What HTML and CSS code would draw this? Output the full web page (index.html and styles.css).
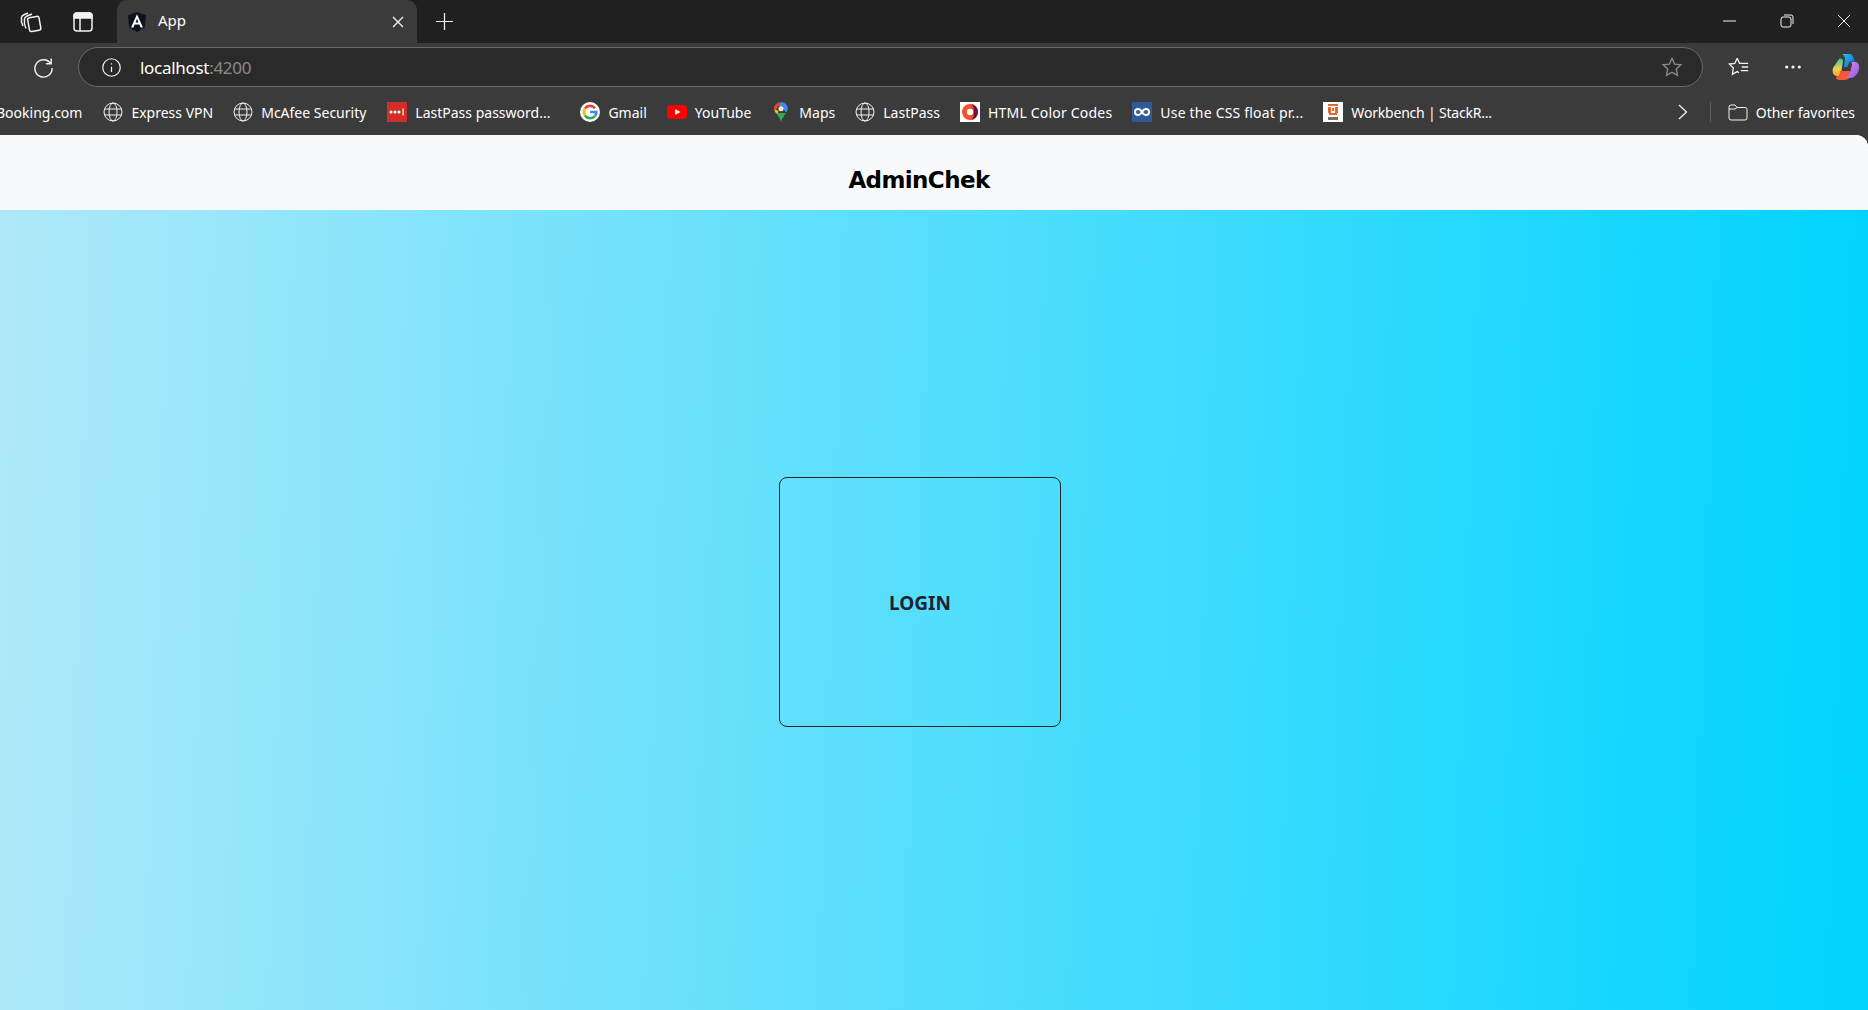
FILE: index.html
```html
<!DOCTYPE html>
<html>
<head>
    <meta charset="utf-8" />
    <title>App</title>
    <link rel="stylesheet" href="styles.css">
</head>
<body>
    <section class="tabstrip">
        <div class="stripicons">
            <svg class="ico" viewBox="0 0 24 24"><rect x="9.500" y="7" width="11.500" height="14" rx="2" transform="rotate(-10 15 14)"/><path d="M7 18.500C5.500 15.500 5 12 5.500 8.800c.2-1.300 1-2 2-2.500l5.500-2.300M4 16C2.500 13 2 10 2.500 7.500c.2-1.300 1-2 2-2.500l4.500-2"/></svg>
            <svg class="ico" viewBox="0 0 24 24"><rect x="3" y="3" width="18" height="18" rx="3"/><path class="fill" d="M3 6a3 3 0 0 1 3-3h12a3 3 0 0 1 3 3v2H3z"/><path d="M9 8v13"/></svg>
        </div>
        <div class="tab">
            <svg class="tabicon" viewBox="0 0 24 24"><path fill="#10131c" d="M12 1l10 3.500-1.500 13.500L12 23l-8.500-5L2 4.500z"/><path fill="#fff" d="M12 3.500L5.500 18h2.600l1.300-3.300h5.200l1.300 3.300h2.600zM10.400 12.500L12 8.500l1.600 4z"/></svg>
            <span class="tabtitle">App</span>
            <svg class="tabclose" viewBox="0 0 12 12"><path d="M1 1l10 10M11 1L1 11"/></svg>
        </div>
        <svg class="newtab" viewBox="0 0 20 20"><path d="M10 1v18M1 10h18"/></svg>
        <div class="winctrls">
            <svg class="winbtn" viewBox="0 0 14 14"><path d="M0 7h13"/></svg>
            <svg class="winbtn" viewBox="0 0 14 14"><rect x="1" y="3" width="10" height="10" rx="2"/><path d="M4 1h7a2 2 0 0 1 2 2v7"/></svg>
            <svg class="winbtn" viewBox="0 0 14 14"><path d="M1 1l12 12M13 1L1 13"/></svg>
        </div>
    </section>

    <section class="addressrow">
        <svg class="reload" viewBox="0 0 24 24"><path d="M19.500 8A9 9 0 1 0 21 12.500M20 2.500V8h-5.500"/></svg>
        <div class="addressbar">
            <svg class="info" viewBox="0 0 24 24"><circle cx="12" cy="12" r="10"/><path d="M12 11v6M12 7v1.500"/></svg>
            <span class="url">localhost<span class="port">:4200</span></span>
            <svg class="star" viewBox="0 0 24 24"><path d="M12 2.500l2.900 6.300 6.800.8-5 4.700 1.300 6.800-6-3.400-6 3.400 1.300-6.800-5-4.700 6.800-.8z"/></svg>
        </div>
        <svg class="favs" viewBox="0 0 24 24"><path d="M10 2.500L7.400 8l-5.900.8L5.800 13l-1 7 5.200-3 2 1.300M10 2.500L12.600 8H22M15 12h7M14 16h8"/></svg>
        <svg class="more" viewBox="0 0 20 4"><circle cx="3" cy="2" r="1.800"/><circle cx="10" cy="2" r="1.800"/><circle cx="17" cy="2" r="1.800"/></svg>
        <svg class="copilot" viewBox="0 0 28 28">
            <defs>
                <linearGradient id="cpa" x1="0" y1="0" x2="1" y2="1"><stop offset="0" stop-color="#1ec8e8"/><stop offset="1" stop-color="#1a5fe0"/></linearGradient>
                <linearGradient id="cpb" x1="0" y1="0" x2="0" y2="1"><stop offset="0" stop-color="#3fc0a0"/><stop offset=".6" stop-color="#f2d34a"/><stop offset="1" stop-color="#f59a3a"/></linearGradient>
                <linearGradient id="cpc" x1="0" y1="0" x2="1" y2="1"><stop offset="0" stop-color="#e58be0"/><stop offset="1" stop-color="#8a58e8"/></linearGradient>
            </defs>
            <path fill="url(#cpb)" d="M7 6c2-1 4 0 4 2l-2 12c-1 3-3 4-5 3C1 22 0 19 1 15z"/>
            <path fill="#f2573c" d="M8 18h9c2 0 2 3 1 5-1 3-3 4-5 4H7c-2 0-3-1-3-3 2 0 4-2 4-6z"/>
            <path fill="url(#cpa)" d="M10 1h7c3 0 4 2 5 5l1 3c-2-1-5-1-6 1l-1 3-1 1h-3l1-8c0-2-1-4-3-5z"/>
            <path fill="url(#cpc)" d="M19 9h4c3 0 5 3 4 7-1 5-4 8-8 9-2 0-4 0-5-1 2 0 3-2 4-4l2-8c0-1 0-2-1-3z"/>
        </svg>
    </section>

    <section class="bookmarks">
        <div class="bmlist">
            <span class="bm bmfirst"><span class="bmtext">Booking.com</span></span>
            <span class="bm">
                <svg class="bmicon globe" viewBox="0 0 20 20"><circle cx="10" cy="10" r="9"/><ellipse cx="10" cy="10" rx="4" ry="9"/><path d="M1.500 7h17M1.500 13h17"/></svg>
                <span class="bmtext">Express VPN</span>
            </span>
            <span class="bm">
                <svg class="bmicon globe" viewBox="0 0 20 20"><circle cx="10" cy="10" r="9"/><ellipse cx="10" cy="10" rx="4" ry="9"/><path d="M1.500 7h17M1.500 13h17"/></svg>
                <span class="bmtext">McAfee Security</span>
            </span>
            <span class="bm bmclipped">
                <svg class="bmicon" viewBox="0 0 20 20"><rect width="20" height="20" fill="#d32d27"/><circle cx="4" cy="10" r="1.500" fill="#fff"/><circle cx="8" cy="10" r="1.500" fill="#fff"/><circle cx="12" cy="10" r="1.500" fill="#fff"/><rect x="15.500" y="6.500" width="1.200" height="7" fill="#fff"/></svg>
                <span class="bmtext">LastPass password...</span>
            </span>
            <span class="bm">
                <svg class="bmicon" viewBox="0 0 20 20"><circle cx="10" cy="10" r="10" fill="#fff"/><path fill="none" stroke="#ea4335" stroke-width="2.600" d="M15 6.200A6.300 6.300 0 0 0 5 6.500"/><path fill="none" stroke="#fbbc05" stroke-width="2.600" d="M5 6.500a6.300 6.300 0 0 0 0 7"/><path fill="none" stroke="#34a853" stroke-width="2.600" d="M5 13.500a6.300 6.300 0 0 0 10 .5"/><path fill="none" stroke="#4285f4" stroke-width="2.600" d="M15 14c1-1 1.300-2.300 1.300-4H10"/></svg>
                <span class="bmtext">Gmail</span>
            </span>
            <span class="bm">
                <svg class="bmicon" viewBox="0 0 20 20"><rect y="3" width="20" height="14" rx="4" fill="#f00"/><path fill="#fff" d="M8 7l5.500 3L8 13z"/></svg>
                <span class="bmtext">YouTube</span>
            </span>
            <span class="bm">
                <svg class="bmicon" viewBox="0 0 20 20"><path fill="#34a853" d="M10 20c-1-4-3-6-5-9h10c-2 3-4 5-5 9z"/><path fill="#fbbc05" d="M4.500 10.500C3.500 9 3.200 8 3.200 6.800L7.500 9l-1 3z"/><path fill="#4285f4" d="M10 0c3.800 0 6.800 3 6.800 6.800 0 1.200-.5 2.500-1.500 3.700L12 7 7 3z"/><path fill="#ea4335" d="M4.500 2.500L7.500 5 3.200 8.500C3 5.500 3 4 4.500 2.500z"/><path fill="#db4437" d="M4.500 2.500C6 .8 8 0 10 0L7 5z"/><circle cx="10" cy="6.800" r="2.500" fill="#f3e9c0"/></svg>
                <span class="bmtext">Maps</span>
            </span>
            <span class="bm">
                <svg class="bmicon globe" viewBox="0 0 20 20"><circle cx="10" cy="10" r="9"/><ellipse cx="10" cy="10" rx="4" ry="9"/><path d="M1.500 7h17M1.500 13h17"/></svg>
                <span class="bmtext">LastPass</span>
            </span>
            <span class="bm">
                <svg class="bmicon" viewBox="0 0 20 20"><rect width="20" height="20" fill="#fff"/><circle cx="10" cy="10" r="8" fill="#f4512c"/><path fill="#6d1237" d="M10 2a8 8 0 0 1 0 16c3 0 4-4 4-8s-1-8-4-8z"/><circle cx="10" cy="10" r="3.200" fill="#fff"/></svg>
                <span class="bmtext bmloose">HTML Color Codes</span>
            </span>
            <span class="bm">
                <svg class="bmicon" viewBox="0 0 20 20"><rect width="20" height="20" fill="#2f5b96"/><path fill="none" stroke="#fff" stroke-width="2" d="M10 10C8.500 7.500 7.300 7 6 7a3 3 0 0 0 0 6c1.300 0 2.500-.5 4-3s2.700-3 4-3a3 3 0 0 1 0 6c-1.300 0-2.500-.5-4-3z"/></svg>
                <span class="bmtext bmloose">Use the CSS float pr...</span>
            </span>
            <span class="bm">
                <svg class="bmicon" viewBox="0 0 20 20"><rect width="20" height="20" fill="#fff"/><path fill="#e8662e" d="M5 2h10v2H5zM5 5h3v6H5zM12 5h3v6h-3zM9 6h2v3H9zM6 11h8v2H6z"/><rect x="5" y="15" width="10" height="3" fill="#7a6a60"/></svg>
                <span class="bmtext bmtight">Workbench | StackR...</span>
            </span>
        </div>
        <svg class="bmmore" viewBox="0 0 10 16"><path d="M1 1l7.500 7L1 15"/></svg>
        <span class="bmsep"></span>
        <span class="bm bmother">
            <svg class="bmicon globe" viewBox="0 0 20 20"><path d="M1 5a2 2 0 0 1 2-2h4l2 2.500h8a2 2 0 0 1 2 2V16a2 2 0 0 1-2 2H3a2 2 0 0 1-2-2zM1 7h6l2-1.500"/></svg>
            <span class="bmtext">Other favorites</span>
        </span>
    </section>

    <section class="page">
        <header class="apptitle">AdminChek</header>
        <main class="appmain">
            <div class="logincard">LOGIN</div>
        </main>
    </section>
</body>
</html>
```

FILE: styles.css
```css
* {
    padding: 0;
    margin: 0;
    box-sizing: border-box;
}
html, body {
    height: 100%;
    overflow: hidden;
}
body {
    display: flex;
    flex-direction: column;
    background-color: #3b3b3b;
    font-family: "Noto Sans", "Liberation Sans", sans-serif;
    color: #fff;
}
svg {
    display: block;
    flex-shrink: 0;
    fill: none;
    stroke: #f2f2f2;
}

/* tab strip */
.tabstrip {
    height: 43px;
    display: flex;
    align-items: center;
    background-color: #202020;
}
.stripicons {
    width: 117px;
    display: flex;
    align-items: center;
    gap: 28px;
    padding-left: 19px;
}
.ico {
    width: 24px;
    height: 24px;
    stroke-width: 1.500;
}
.ico .fill {
    fill: #f2f2f2;
}
.tab {
    width: 300px;
    height: 43px;
    display: flex;
    align-items: center;
    padding: 0 13px 0 9px;
    background-color: #3b3b3b;
    border-radius: 10px 10px 0 0;
}
.tabicon {
    width: 22px;
    height: 22px;
    stroke: none;
}
.tabtitle {
    flex-grow: 1;
    margin-left: 10px;
    padding-bottom: 4px;
    font-size: 15px;
}
.tabclose {
    width: 12px;
    height: 12px;
    stroke-width: 1.300;
}
.newtab {
    width: 19px;
    height: 19px;
    margin-left: 18px;
    stroke-width: 1.300;
}
.winctrls {
    margin-left: auto;
    display: flex;
    align-items: center;
    gap: 43px;
    padding: 0 17px 2px 0;
}
.winbtn {
    width: 14px;
    height: 14px;
    stroke-width: 1;
}

/* address row */
.addressrow {
    height: 46px;
    display: flex;
    align-items: center;
    padding: 2px 0 0 32px;
}
.reload {
    width: 23px;
    height: 23px;
    stroke-width: 1.500;
}
.addressbar {
    width: 1625px;
    height: 40px;
    margin-left: 23px;
    display: flex;
    align-items: center;
    padding: 0 19px 0 22px;
    background-color: #2a2a2a;
    border: 1.500px solid #6a6a6a;
    border-radius: 20px;
}
.info {
    width: 21px;
    height: 21px;
    stroke-width: 1.400;
}
.url {
    flex-grow: 1;
    margin-left: 18px;
    font-size: 17px;
    letter-spacing: -.3px;
}
.port {
    color: #8a8a8a;
}
.star {
    width: 22px;
    height: 22px;
    stroke: #8c8c8c;
    stroke-width: 1.500;
}
.favs {
    width: 22px;
    height: 22px;
    margin-left: 25px;
    stroke-width: 1.400;
}
.more {
    width: 18px;
    height: 4px;
    margin-left: 34px;
    fill: #f2f2f2;
    stroke: none;
}
.copilot {
    width: 28px;
    height: 28px;
    margin-left: 30px;
    stroke: none;
}

/* bookmarks bar */
.bookmarks {
    height: 46px;
    display: flex;
    align-items: center;
    font-size: 14px;
}
.bmlist {
    flex-grow: 1;
    display: flex;
    align-items: center;
    gap: 20px;
    margin-left: -4px;
}
.bm {
    display: flex;
    align-items: center;
    gap: 8px;
    white-space: nowrap;
}
.bmfirst {
    margin-right: 1px;
}
.bmclipped {
    margin: 0 10px 0 1px;
}
.bmloose {
    letter-spacing: .2px;
}
.bmtight {
    letter-spacing: -.2px;
}
.bmicon {
    width: 20px;
    height: 20px;
    stroke: none;
}
.globe {
    stroke: #f2f2f2;
    stroke-width: 1;
}
.bmmore {
    width: 10px;
    height: 16px;
    margin-right: -1px;
    stroke-width: 1.300;
}
.bmsep {
    width: 1px;
    height: 20px;
    margin-left: 23px;
    background-color: #5c5c5c;
}
.bmother {
    margin: 0 13px 0 17px;
}

/* page */
.page {
    flex-grow: 1;
    display: flex;
    flex-direction: column;
    overflow: hidden;
    background-color: #f8f9fb;
    border-radius: 0 12px 0 0;
}
.apptitle {
    height: 75px;
    display: flex;
    align-items: center;
    justify-content: center;
    padding: 14px 30px 0 0;
    font-family: "DejaVu Sans", sans-serif;
    font-size: 23px;
    font-weight: 700;
    letter-spacing: -.6px;
    color: #000;
    background-color: #f8f9fb;
}
.appmain {
    flex-grow: 1;
    display: flex;
    align-items: center;
    justify-content: center;
    padding: 0 28px 16px 0;
    background: linear-gradient(92deg, #afe9f9 0%, #6ee1fc 35%, #00d4ff 100%);
}
.logincard {
    width: 282px;
    height: 250px;
    display: flex;
    align-items: center;
    justify-content: center;
    padding-top: 2px;
    font-size: 19px;
    font-weight: 700;
    color: #1f2330;
    border: 1px solid #222;
    border-radius: 8px;
}
```
